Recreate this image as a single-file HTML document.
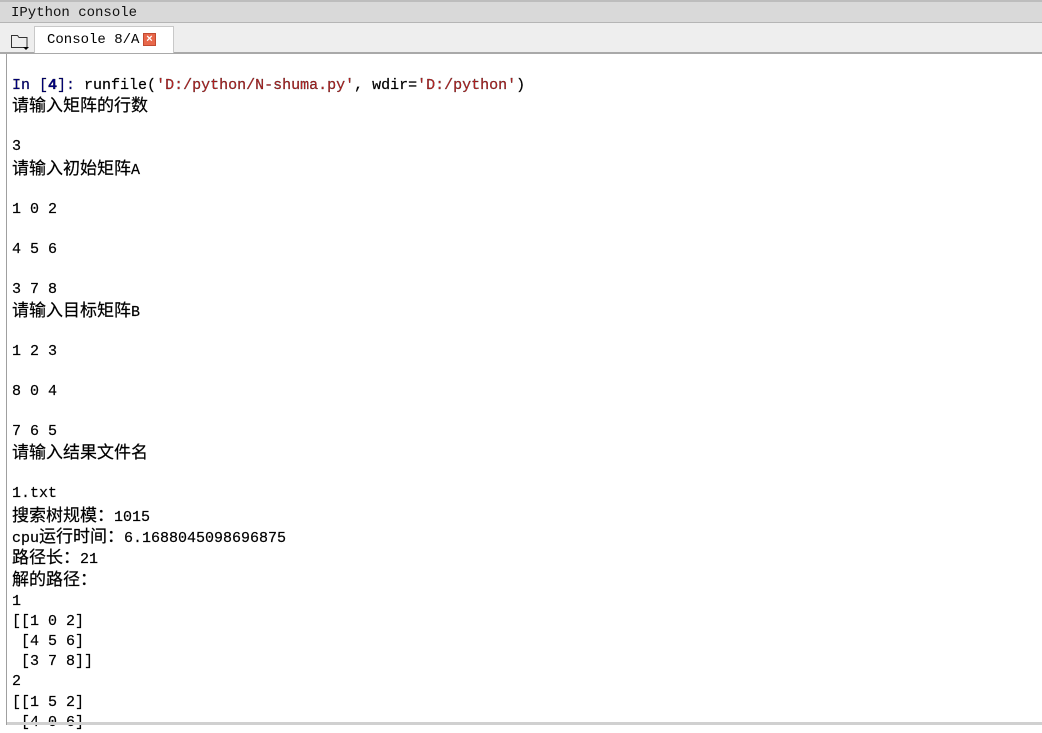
<!DOCTYPE html>
<html><head><meta charset="utf-8"><style>
*{margin:0;padding:0}
body{width:1042px;height:725px;overflow:hidden;background:#fff;position:relative;font-family:"Liberation Mono","Noto Sans CJK SC",monospace;font-size:15px;color:#000}
#title{position:absolute;left:0;top:0;width:1042px;height:23px;background:#d9d9d9;border-top:2px solid #bdbdbd;border-bottom:1px solid #b5b5b5;box-sizing:border-box}
#title span{position:absolute;left:11px;top:3px;font-family:"Liberation Mono",monospace;font-size:14px;color:#111}
#tabs{position:absolute;left:0;top:23px;width:1042px;height:31px;background:#eeeeee;border-bottom:2px solid #a9a9a9;box-sizing:border-box}
#tab{position:absolute;left:34px;top:3px;width:140px;height:27px;background:#fff;border:1px solid #c8c8c8;border-bottom:none;box-sizing:border-box}
#tab span{position:absolute;left:12px;top:5px;font-size:14px;font-family:"Liberation Mono",monospace}
#x{position:absolute;left:108px;top:6px;width:13px;height:13px;background:#e8674a;border:1px solid #c24a30;box-sizing:border-box;color:#fff;font:bold 11px/11px "Liberation Sans",sans-serif;text-align:center}
#lb{position:absolute;left:6px;top:54px;width:1px;height:671px;background:#a0a0a0}
#bot{position:absolute;left:7px;top:722px;width:1035px;height:3px;background:#d0d0d0}
.l{position:absolute;left:12px;white-space:pre;line-height:20px;-webkit-text-stroke:0.2px #000}
.c{font-family:"Noto Sans CJK SC",sans-serif;font-size:17px}
.b{color:#000080}.s{color:#b22}
</style></head><body>
<div id="title"><span>IPython console</span></div>
<div id="tabs">
<svg style="position:absolute;left:10px;top:10px" width="20" height="18" viewBox="0 0 20 18"><path d="M1.5 2.5h6l1.5 2h8v10h-15.5z" fill="none" stroke="#333"/><path d="M13 14l3 3 3-3z" fill="#000"/></svg>
<div id="tab"><span>Console 8/A</span><div id="x">×</div></div>
</div>
<div id="lb"></div>
<div class="l" style="top:76px"><span class="b">In [<b>4</b>]:</span> runfile(<span class="s">'D:/python/N-shuma.py'</span>, wdir=<span class="s">'D:/python'</span>)</div>
<div class="l" style="top:94px"><span class="c">请输入矩阵的行数</span></div>
<div class="l" style="top:137px">3</div>
<div class="l" style="top:157px"><span class="c">请输入初始矩阵</span>A</div>
<div class="l" style="top:200px">1 0 2</div>
<div class="l" style="top:240px">4 5 6</div>
<div class="l" style="top:280px">3 7 8</div>
<div class="l" style="top:299px"><span class="c">请输入目标矩阵</span>B</div>
<div class="l" style="top:342px">1 2 3</div>
<div class="l" style="top:382px">8 0 4</div>
<div class="l" style="top:422px">7 6 5</div>
<div class="l" style="top:441px"><span class="c">请输入结果文件名</span></div>
<div class="l" style="top:484px">1.txt</div>
<div class="l" style="top:504px"><span class="c">搜索树规模：</span>1015</div>
<div class="l" style="top:525px">cpu<span class="c">运行时间：</span>6.1688045098696875</div>
<div class="l" style="top:546px"><span class="c">路径长：</span>21</div>
<div class="l" style="top:568px"><span class="c">解的路径：</span></div>
<div class="l" style="top:592px">1</div>
<div class="l" style="top:612px">[[1 0 2]</div>
<div class="l" style="top:632px"> [4 5 6]</div>
<div class="l" style="top:652px"> [3 7 8]]</div>
<div class="l" style="top:672px">2</div>
<div class="l" style="top:693px">[[1 5 2]</div>
<div class="l" style="top:713px"> [4 0 6]</div>
<div id="bot"></div>
</body></html>
